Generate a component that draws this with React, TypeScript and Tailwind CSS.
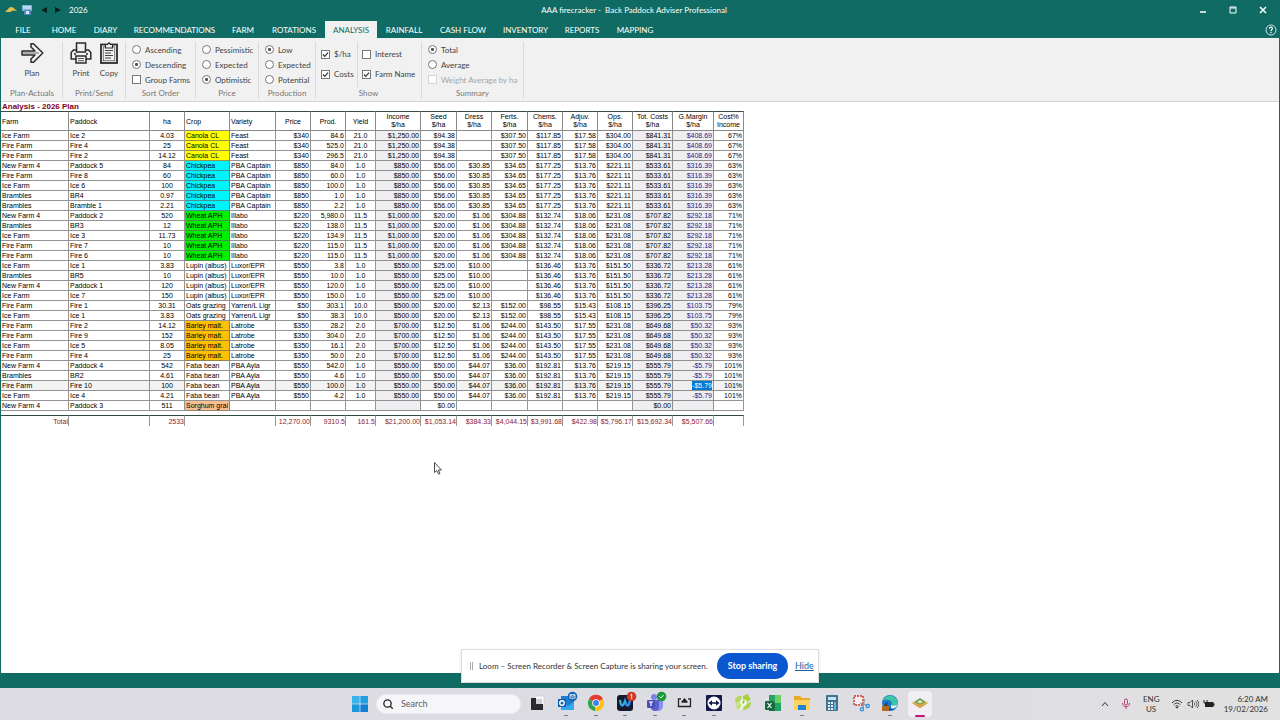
import { useState } from 'react'
import type { ReactNode } from 'react'
import clsx from 'clsx'

const tabs = [
  { label: 'FILE', width: 'w-[40px]' },
  { label: 'HOME', width: 'w-[42px]' },
  { label: 'DIARY', width: 'w-[41px]' },
  { label: 'RECOMMENDATIONS', width: 'w-[97px]' },
  { label: 'FARM', width: 'w-[40px]' },
  { label: 'ROTATIONS', width: 'w-[62px]' },
  { label: 'ANALYSIS', width: 'w-[52px]' },
  { label: 'RAINFALL', width: 'w-[54px]' },
  { label: 'CASH FLOW', width: 'w-[64px]' },
  { label: 'INVENTORY', width: 'w-[61px]' },
  { label: 'REPORTS', width: 'w-[52px]' },
  { label: 'MAPPING', width: 'w-[54px]' },
]

const columns = [
  { title: 'Farm', width: 'w-[68px]', align: 'text-left' },
  { title: 'Paddock', width: 'w-[81px]', align: 'text-left' },
  { title: 'ha', width: 'w-[35px]', align: 'text-center' },
  { title: 'Crop', width: 'w-[45px]', align: 'text-left' },
  { title: 'Variety', width: 'w-[46px]', align: 'text-left' },
  { title: 'Price', width: 'w-[35px]', align: 'text-right' },
  { title: 'Prod.', width: 'w-[35px]', align: 'text-right' },
  { title: 'Yield', width: 'w-[30px]', align: 'text-center' },
  { title: 'Income', unit: '$/ha', width: 'w-[45px]', align: 'text-right' },
  { title: 'Seed', unit: '$/ha', width: 'w-[36px]', align: 'text-right' },
  { title: 'Dress', unit: '$/ha', width: 'w-[35px]', align: 'text-right' },
  { title: 'Ferts.', unit: '$/ha', width: 'w-[36px]', align: 'text-right' },
  { title: 'Chems.', unit: '$/ha', width: 'w-[35px]', align: 'text-right' },
  { title: 'Adjuv.', unit: '$/ha', width: 'w-[35px]', align: 'text-right' },
  { title: 'Ops.', unit: '$/ha', width: 'w-[35px]', align: 'text-right' },
  { title: 'Tot. Costs', unit: '$/ha', width: 'w-[40px]', align: 'text-right' },
  { title: 'G.Margin', unit: '$/ha', width: 'w-[41px]', align: 'text-right' },
  { title: 'Cost%', unit: 'Income', width: 'w-[30px]', align: 'text-right' },
]

const CROP = 3
const MARGIN = 16
const shaded = [8, 15, 16]

const cropColors: Record<string, string> = {
  'Canola CL': 'bg-[#ffff00]',
  Chickpea: 'bg-[#00f4fc]',
  'Wheat APH': 'bg-[#00f000]',
  'Barley malt.': 'bg-[#ffc000]',
  'Sorghum grai': 'bg-[#fabf8f]',
}

// the costs are the same for every paddock with the same crop
const crops: Record<string, { variety: string; price: string; yld: string; costs: string[] }> = {
  'Canola CL': { variety: 'Feast', price: '$340', yld: '21.0', costs: ['$1,250.00', '$94.38', '', '$307.50', '$117.85', '$17.58', '$304.00', '$841.31', '$408.69', '67%'] },
  Chickpea: { variety: 'PBA Captain', price: '$850', yld: '1.0', costs: ['$850.00', '$56.00', '$30.85', '$34.65', '$177.25', '$13.76', '$221.11', '$533.61', '$316.39', '63%'] },
  'Wheat APH': { variety: 'Illabo', price: '$220', yld: '11.5', costs: ['$1,000.00', '$20.00', '$1.06', '$304.88', '$132.74', '$18.06', '$231.08', '$707.82', '$292.18', '71%'] },
  'Lupin (albus)': { variety: 'Luxor/EPR', price: '$550', yld: '1.0', costs: ['$550.00', '$25.00', '$10.00', '', '$136.46', '$13.76', '$151.50', '$336.72', '$213.28', '61%'] },
  'Oats grazing': { variety: 'Yarren/L Ligr', price: '$50', yld: '10.0', costs: ['$500.00', '$20.00', '$2.13', '$152.00', '$98.55', '$15.43', '$108.15', '$396.25', '$103.75', '79%'] },
  'Barley malt.': { variety: 'Latrobe', price: '$350', yld: '2.0', costs: ['$700.00', '$12.50', '$1.06', '$244.00', '$143.50', '$17.55', '$231.08', '$649.68', '$50.32', '93%'] },
  'Faba bean': { variety: 'PBA Ayla', price: '$550', yld: '1.0', costs: ['$550.00', '$50.00', '$44.07', '$36.00', '$192.81', '$13.76', '$219.15', '$555.79', '-$5.79', '101%'] },
  'Sorghum grai': { variety: '', price: '', yld: '', costs: ['', '$0.00', '', '', '', '', '', '$0.00', '', ''] },
}

const paddocks = [
  ['Ice Farm', 'Ice 2', '4.03', 'Canola CL', '84.6'],
  ['Fire Farm', 'Fire 4', '25', 'Canola CL', '525.0'],
  ['Fire Farm', 'Fire 2', '14.12', 'Canola CL', '296.5'],
  ['New Farm 4', 'Paddock 5', '84', 'Chickpea', '84.0'],
  ['Fire Farm', 'Fire 8', '60', 'Chickpea', '60.0'],
  ['Ice Farm', 'Ice 6', '100', 'Chickpea', '100.0'],
  ['Brambles', 'BR4', '0.97', 'Chickpea', '1.0'],
  ['Brambles', 'Bramble 1', '2.21', 'Chickpea', '2.2'],
  ['New Farm 4', 'Paddock 2', '520', 'Wheat APH', '5,980.0'],
  ['Brambles', 'BR3', '12', 'Wheat APH', '138.0'],
  ['Ice Farm', 'Ice 3', '11.73', 'Wheat APH', '134.9'],
  ['Fire Farm', 'Fire 7', '10', 'Wheat APH', '115.0'],
  ['Fire Farm', 'Fire 6', '10', 'Wheat APH', '115.0'],
  ['Ice Farm', 'Ice 1', '3.83', 'Lupin (albus)', '3.8'],
  ['Brambles', 'BR5', '10', 'Lupin (albus)', '10.0'],
  ['New Farm 4', 'Paddock 1', '120', 'Lupin (albus)', '120.0'],
  ['Ice Farm', 'Ice 7', '150', 'Lupin (albus)', '150.0'],
  ['Fire Farm', 'Fire 1', '30.31', 'Oats grazing', '303.1'],
  ['Ice Farm', 'Ice 1', '3.83', 'Oats grazing', '38.3'],
  ['Fire Farm', 'Fire 2', '14.12', 'Barley malt.', '28.2'],
  ['Fire Farm', 'Fire 9', '152', 'Barley malt.', '304.0'],
  ['Ice Farm', 'Ice 5', '8.05', 'Barley malt.', '16.1'],
  ['Fire Farm', 'Fire 4', '25', 'Barley malt.', '50.0'],
  ['New Farm 4', 'Paddock 4', '542', 'Faba bean', '542.0'],
  ['Brambles', 'BR2', '4.61', 'Faba bean', '4.6'],
  ['Fire Farm', 'Fire 10', '100', 'Faba bean', '100.0'],
  ['Ice Farm', 'Ice 4', '4.21', 'Faba bean', '4.2'],
  ['New Farm 4', 'Paddock 3', '511', 'Sorghum grai', ''],
]

const totals = ['Total', '', '2533', '', '', '12,270.00', '9310.5', '161.5', '$21,200.00', '$1,053.14', '$384.33', '$4,044.15', '$3,991.68', '$422.98', '$5,796.17', '$15,692.34', '$5,507.66', '']

function Radio({ name, label, checked }: { name: string; label: string; checked?: boolean }) {
  return (
    <label className="flex h-[15px] items-center gap-1">
      <input
        type="radio"
        name={name}
        defaultChecked={checked}
        className="size-[9px] shrink-0 appearance-none rounded-full border border-[#777] bg-white checked:bg-[radial-gradient(circle,#555_25%,#fff_40%)]"
      />
      {label}
    </label>
  )
}

function Checkbox({ label, checked, disabled, height = 'h-[15px]' }: { label: string; checked?: boolean; disabled?: boolean; height?: string }) {
  return (
    <label className={clsx('flex items-center gap-1', height, disabled && 'text-[#a6a6a6]')}>
      <span className="grid shrink-0">
        <input
          type="checkbox"
          defaultChecked={checked}
          disabled={disabled}
          className="peer col-start-1 row-start-1 size-[9px] appearance-none border border-[#777] bg-white disabled:border-[#d4d4d4]"
        />
        <svg viewBox="0 0 9 9" className="pointer-events-none invisible col-start-1 row-start-1 size-[9px] peer-checked:visible">
          <path d="M2 4.5 3.8 6.4 7 2.6" fill="none" stroke="#333" strokeWidth="1.2" />
        </svg>
      </span>
      {label}
    </label>
  )
}

function Group({ title, width, children }: { title: string; width: string; children: ReactNode }) {
  return (
    <fieldset className={clsx('flex shrink-0 flex-col border-r border-[#dadada]', width)}>
      <div className="flex h-[45px]">{children}</div>
      <div className="h-3 text-center leading-3 text-[#777]">{title}</div>
    </fieldset>
  )
}

function ArrowIcon() {
  return (
    <svg viewBox="0 0 24 22" className="h-[22px] w-6" fill="none" stroke="#2b2b2b" strokeWidth="1.5" strokeLinejoin="round">
      <path d="M2 9h13l-4-4V1.800h2.500L22.800 11l-9.300 9.200H11V17l4-4H2z" />
      <path d="M3 11h16" strokeWidth=".7" />
    </svg>
  )
}

function PrintIcon() {
  return (
    <svg viewBox="0 0 22 22" className="size-[22px]" fill="none" stroke="#2b2b2b" strokeWidth="1.5">
      <path d="M6.500 8V1h9v7" />
      <path d="M6 17H1.200v-6.500L3.500 8h3v2h9V8h3l2.300 2.500V17H16" />
      <path d="M6 14h10v7H6zM4 12h2M16 12h2" />
      <path d="M8 16.500h6M8 18.700h6" strokeWidth=".8" />
    </svg>
  )
}

function CopyIcon() {
  return (
    <svg viewBox="0 0 20 22" className="h-[22px] w-5" fill="none" stroke="#2b2b2b">
      <rect x="2" y="2.5" width="16" height="18.5" strokeWidth="1.8" />
      <rect x="4.2" y="4.8" width="11.6" height="14" strokeWidth=".6" />
      <path d="M6.500 2.500h2L10 .8l1.500 1.700h2V6h-7z" fill="#f1f1f1" strokeWidth="1.2" />
      <path d="M6 8.500h8M6 11h6M6 13.500h8M6 16h6" strokeWidth=".9" />
    </svg>
  )
}

function Ribbon() {
  return (
    <section className="flex h-16 overflow-hidden border-b border-[#d2d4d8] bg-[#f1f1f1] pt-1 pb-[2px] pl-px text-[8px] text-[#444]">
      <Group title="Plan-Actuals" width="w-[61px]">
        <button type="button" className="flex flex-1 flex-col items-center">
          <ArrowIcon />
          <span className="mt-[3px] leading-3">Plan</span>
        </button>
      </Group>
      <Group title="Print/Send" width="w-[63px]">
        <button type="button" className="flex w-9 flex-col items-center">
          <PrintIcon />
          <span className="mt-[3px] leading-3">Print</span>
        </button>
        <button type="button" className="flex w-5 flex-col items-center">
          <CopyIcon />
          <span className="mt-[3px] leading-3">Copy</span>
        </button>
      </Group>
      <Group title="Sort Order" width="w-[70px]">
        <div className="pl-[6px]">
          <Radio name="sort" label="Ascending" />
          <Radio name="sort" label="Descending" checked />
          <Checkbox label="Group Farms" />
        </div>
      </Group>
      <Group title="Price" width="w-[63px]">
        <div className="pl-[6px]">
          <Radio name="price" label="Pessimistic" />
          <Radio name="price" label="Expected" />
          <Radio name="price" label="Optimistic" checked />
        </div>
      </Group>
      <Group title="Production" width="w-[57px]">
        <div className="pl-[6px]">
          <Radio name="production" label="Low" checked />
          <Radio name="production" label="Expected" />
          <Radio name="production" label="Potential" />
        </div>
      </Group>
      <Group title="Show" width="w-[106px]">
        <div className="w-[42px] border-r border-[#dadada] pt-[2px] pl-[5px]">
          <Checkbox label="$/ha" height="h-5" checked />
          <Checkbox label="Costs" height="h-5" checked />
        </div>
        <div className="pt-[2px] pl-1">
          <Checkbox label="Interest" height="h-5" />
          <Checkbox label="Farm Name" height="h-5" checked />
        </div>
      </Group>
      <Group title="Summary" width="w-[102px]">
        <div className="pl-[6px]">
          <Radio name="summary" label="Total" checked />
          <Radio name="summary" label="Average" />
          <Checkbox label="Weight Average by ha" disabled />
        </div>
      </Group>
    </section>
  )
}

function AnalysisTable() {
  return (
    <table className="w-[743px] table-fixed border-separate border-spacing-0 font-['Liberation_Sans',sans-serif] text-[7px] leading-[9px] whitespace-nowrap text-black">
      <caption className="h-[9px] pl-px text-left text-[8px] leading-[9px] font-bold text-[#800020]">
        Analysis - 2026 Plan
      </caption>
      <colgroup>
        {columns.map((c) => (
          <col key={c.title} className={c.width} />
        ))}
      </colgroup>
      <thead>
        <tr className="h-5">
          {columns.map((c, i) => (
            <th
              key={c.title}
              scope="col"
              className={clsx(
                'border-t border-r border-b border-t-[#3c4a46] border-r-[#8a8a8a] border-b-[#8a8a8a] p-0 align-middle font-normal',
                i < 2 || i === 3 || i === 4 ? 'pl-px text-left' : 'text-center',
              )}
            >
              <div className={c.unit && 'leading-[8px]'}>
                {c.title}
                {c.unit && (
                  <>
                    <br />
                    {c.unit}
                  </>
                )}
              </div>
            </th>
          ))}
        </tr>
      </thead>
      <tbody>
        {paddocks.map(([farm, paddock, ha, crop, prod]) => {
          const { variety, price, yld, costs } = crops[crop]
          const selected = paddock === 'Fire 10'
          const cells = [farm, paddock, ha, crop, variety, price, prod, yld, ...costs]
          return (
            <tr key={paddock + crop} className={selected ? 'bg-[#f3f3f3]' : 'bg-white'}>
              {cells.map((text, i) => (
                <td
                  key={i}
                  className={clsx(
                    'h-[10px] border-r border-b border-[#666]/70 p-0 px-px',
                    columns[i].align,
                    shaded.includes(i) && 'bg-[#efeff1]',
                    i === MARGIN && 'text-[#1c1c8c]',
                    i === CROP && (cropColors[crop] ?? 'bg-white'),
                  )}
                >
                  {selected && i === MARGIN ? <span className="inline-block bg-[#0078d7] text-white">{text}</span> : text}
                </td>
              ))}
            </tr>
          )
        })}
      </tbody>
      <tfoot className="text-[#8c1c30]">
        <tr>
          <td colSpan={18} className="h-1 p-0" />
        </tr>
        <tr>
          {totals.map((text, i) => (
            <td
              key={i}
              className={clsx(
                'h-[11px] border-t border-t-[#2f4a40] border-r-[#999] p-0 text-right',
                i !== 3 && 'border-r',
              )}
            >
              {text}
            </td>
          ))}
        </tr>
      </tfoot>
    </table>
  )
}

function TitleBar() {
  return (
    <header className="grid h-[21px] grid-cols-[1fr_auto_1fr] items-center pb-px text-[8px] text-white">
      <div className="flex items-center pl-[5px]">
        <svg viewBox="0 0 12 8" className="h-2 w-3">
          <path d="M0 6 5 1l3 .5L12 5 8 4.500 5 6z" fill="#f3bb45" />
          <path d="m1 5.500 4-3L8 4 5 5.500z" fill="#c9c75a" />
        </svg>
        <svg viewBox="0 0 12 12" className="ml-1 size-3">
          <path d="M1 1h10v6H1z" fill="#7fb2d8" />
          <path d="M2 2h8v3H2z" fill="#b9d8ee" />
          <path d="M3 6h7v5H3z" fill="#4c8ec4" />
          <path d="M5 7h3v3H5z" fill="#dbe8f2" />
        </svg>
        <svg viewBox="0 0 6 6" className="ml-2 size-[6px]">
          <path d="M6 0v6L0 3z" fill="#0a1f1d" />
        </svg>
        <svg viewBox="0 0 6 6" className="ml-2 size-[6px]">
          <path d="M0 0v6l6-3z" fill="#0a1f1d" />
        </svg>
        <span className="ml-2">2026</span>
      </div>
      <h1 className="mr-3 whitespace-pre">AAA firecracker -  Back Paddock Adviser Professional</h1>
      <div className="flex justify-end gap-5 pr-3">
        <button type="button" aria-label="Minimise" className="p-px">
          <svg viewBox="0 0 8 8" className="size-2">
            <path d="M1 6h6" stroke="#fff" strokeWidth="1.5" />
          </svg>
        </button>
        <button type="button" aria-label="Restore" className="p-px">
          <svg viewBox="0 0 8 8" className="size-2">
            <path d="M1 1h6v6H1zM1 2h6" stroke="#fff" fill="none" />
          </svg>
        </button>
        <button type="button" aria-label="Close" className="p-px">
          <svg viewBox="0 0 8 8" className="size-2">
            <path d="m1 1 6 6M7 1 1 7" stroke="#fff" strokeWidth="1.5" />
          </svg>
        </button>
      </div>
    </header>
  )
}

function Badge({ color, children }: { color: string; children: ReactNode }) {
  return (
    <>
      <circle cx="18.5" cy="5.5" r="4.8" fill={color} />
      {children}
    </>
  )
}

const apps: { name: string; open?: boolean; active?: boolean; icon: ReactNode }[] = [
  {
    name: 'Task view',
    icon: (
      <>
        <path d="M10 5h9v10h-9z" fill="#f7f7f7" stroke="#c4c4c4" strokeWidth=".5" />
        <path d="M6 7h5v6h7v6H6z" fill="#2a2a2a" />
        <path d="M11 8h6v5h-6z" fill="#cfcfd2" />
      </>
    ),
  },
  {
    name: 'Outlook',
    open: true,
    icon: (
      <>
        <path d="M7 5h13v14H7z" fill="#1e7fd0" />
        <path d="m7 12 7 3 6-4v8H7z" fill="#35a9ec" />
        <path d="M4 8h8v8H4z" fill="#0f5fae" />
        <circle cx="8" cy="12" r="2.2" fill="none" stroke="#fff" strokeWidth="1.4" />
        <Badge color="#1565b8">
          <path d="M16 3.700h5v3.500h-5zM16 3.700l2.500 2 2.500-2" fill="none" stroke="#fff" strokeWidth=".8" />
        </Badge>
      </>
    ),
  },
  {
    name: 'Chrome',
    open: true,
    icon: (
      <>
        <path d="M12 12 5 8a8 8 0 0 1 14 0z" fill="#e33b2e" />
        <path d="M12 12 5 8a8 8 0 0 0 6 12z" fill="#33a352" />
        <path d="M12 12 19 8a8 8 0 0 1-8 12z" fill="#fbc116" />
        <circle cx="12" cy="12" r="3.8" fill="#fff" />
        <circle cx="12" cy="12" r="3" fill="#4183ee" />
      </>
    ),
  },
  {
    name: 'Webex',
    open: true,
    icon: (
      <>
        <rect x="4" y="4" width="16" height="16" rx="3" fill="#15172b" />
        <path d="M7 9c1 7 3 7 5 1 2 6 4 6 5-1" fill="none" stroke="#2d8ff0" strokeWidth="2.5" />
        <path d="M7 9c1 7 3 7 5 1" fill="none" stroke="#3ad0c0" />
        <Badge color="#d03a20">
          <path d="m17.500 4 1.200-1v5" fill="none" stroke="#fff" strokeWidth=".9" />
        </Badge>
      </>
    ),
  },
  {
    name: 'Teams',
    open: true,
    icon: (
      <>
        <circle cx="11" cy="6" r="3" fill="#7b83eb" />
        <path d="M7 9h13v6a5 5 0 0 1-9 3z" fill="#8a90f0" />
        <path d="M8 9h8v7a4 4 0 0 1-8 0z" fill="#5b60cf" />
        <rect x="4" y="9" width="8" height="8" rx="1" fill="#4a50b8" />
        <path d="M6 11h4M8 11v4" stroke="#fff" strokeWidth="1.2" />
        <Badge color="#1c9a3a">
          <path d="m16.500 5.500 1.500 1.500 2.500-3" fill="none" stroke="#fff" />
        </Badge>
      </>
    ),
  },
  {
    name: 'Send to device',
    open: true,
    icon: (
      <>
        <path d="M9 7.800H6.500v7.700h12V7.800H16" fill="none" stroke="#222" strokeWidth="1.3" />
        <path d="M9.500 10.500 12.500 7l3 3.500v1.300h-6z" fill="#222" />
      </>
    ),
  },
  {
    name: 'TeamViewer',
    open: true,
    icon: (
      <>
        <rect x="4" y="4" width="16" height="16" rx="1" fill="#13184a" />
        <circle cx="12" cy="12" r="6.5" fill="#fff" />
        <path d="M8 12h8" stroke="#13184a" strokeWidth="1.5" />
        <path d="m6.500 12 3.500-2.800v5.600zM17.500 12 14 9.200v5.600z" fill="#13184a" />
      </>
    ),
  },
  {
    name: 'Paddock maps',
    icon: (
      <>
        <path d="M4 9c1-3 4-5 7-4l-2 5-4 3z" fill="#b3d95a" />
        <path d="M5 14l4-3 2 4-3 4c-2-1-3-3-3-5z" fill="#c4e27c" />
        <path d="M12 5l5-2 1 3 2 2-4 3-4-2z" fill="#a4d038" />
        <path d="M20 11c0 5-4 8-8 8l1-3 4-4z" fill="#acd443" />
        <circle cx="12.5" cy="11.5" r="3" fill="#f4f9e6" />
        <path d="M9 19 15 9" stroke="#f4f9e6" strokeWidth="1.5" />
        <path d="M12 9.500h2l-1 3h-2z" fill="#98c72c" />
      </>
    ),
  },
  {
    name: 'Excel',
    icon: (
      <>
        <path d="M8 4h12v16H8z" fill="#23a366" />
        <path d="M14 4h6v8h-6z" fill="#6fd06a" />
        <path d="M8 12h6v8H8z" fill="#18703f" />
        <rect x="4" y="10" width="9" height="9" rx="1" fill="#136b3a" />
        <path d="m6.500 12 4 5M10.500 12l-4 5" stroke="#fff" strokeWidth="1.2" />
      </>
    ),
  },
  {
    name: 'File Explorer',
    open: true,
    icon: (
      <>
        <path d="M4 5h6l2 2h8v12H4z" fill="#eda927" />
        <path d="M4 9h16v10H4z" fill="#fcd461" />
        <path d="M8 14h8v5H8z" fill="#2284d0" />
      </>
    ),
  },
  {
    name: 'Calculator',
    icon: (
      <>
        <rect x="6" y="4" width="12" height="16" rx="1" fill="#46708c" />
        <path d="M8 6h8v3H8z" fill="#bde8f6" />
        <path d="M8 11h2v2H8zM11 11h2v2h-2zM8 14h2v2H8zM11 14h2v2h-2zM8 17h2v2H8zM11 17h2v2h-2z" fill="#e6f1f7" />
        <path d="M14 11h2v8h-2z" fill="#57b8ea" />
      </>
    ),
  },
  {
    name: 'Snipping Tool',
    icon: (
      <>
        <rect x="5" y="5" width="9" height="9" fill="#f4eeee" stroke="#c53a2c" strokeWidth="1.5" strokeDasharray="2 1" />
        <path d="m11 12 7 2.500M15.500 8l-1.500 9" stroke="#8e9aa6" strokeWidth="1.2" />
        <circle cx="13" cy="18.2" r="1.6" fill="none" stroke="#2a8ad6" strokeWidth="1.2" />
        <circle cx="18.7" cy="15" r="1.6" fill="none" stroke="#2a8ad6" strokeWidth="1.2" />
      </>
    ),
  },
  {
    name: 'Edge',
    open: true,
    icon: (
      <>
        <circle cx="12" cy="12" r="8" fill="#1c78c8" />
        <path d="M4.500 10a8 8 0 0 1 15.500 2c0 4-6 4-6 1 0-5-7-5-9.500-3z" fill="#3cc6a6" />
        <path d="M10 11c-2 4 2 8 7 7a8 8 0 0 1-10-1c-2-3 0-6 3-6z" fill="#0e4f9a" />
        <path d="M13 13.500c2 2 5 1 6.500 0-1 3-3.500 5-6.500 3.500z" fill="#dff1f4" />
        <path d="M4 15h7v5H4z" fill="#b06a22" />
        <path d="M6.500 15v-1.200h2V15" fill="none" stroke="#6b3f14" strokeWidth=".8" />
      </>
    ),
  },
  {
    name: 'Back Paddock Adviser',
    active: true,
    icon: (
      <>
        <path d="m12 10 8 2-8 5-8-5z" fill="#d9822c" />
        <path d="m12 8 8 4-8 3.500L4 12z" fill="#e8b24a" />
        <path d="m12 7 6 4-6 3-6-3z" fill="#6ba35c" />
        <path d="m12 9 3 2-3 1.500L9 11z" fill="#f0dfa0" />
      </>
    ),
  },
]

function Taskbar() {
  return (
    <footer className="grid h-8 grid-cols-[1fr_auto_1fr] items-center bg-linear-to-r from-[#dcdbe1] via-[#dcdce3] to-[#e1e1e1] pl-1 text-[#333]">
      <div />
      <div className="flex items-center">
        <button type="button" aria-label="Start">
          <svg viewBox="0 0 16 16" className="size-4">
            <path d="M0 0h7.600v7.600H0z" fill="#35b3ea" />
            <path d="M8.400 0H16v7.600H8.400z" fill="#1f9fe2" />
            <path d="M0 8.400h7.600V16H0z" fill="#1b97de" />
            <path d="M8.400 8.400H16V16H8.400z" fill="#0f7fd2" />
          </svg>
        </button>
        <label className="ml-2 flex h-5 w-[145px] items-center gap-2 rounded-full border border-[#ececf1] bg-[#f6f6f9] px-[6px]">
          <svg viewBox="0 0 10 10" className="size-[10px] shrink-0" fill="none" stroke="#222" strokeWidth="1.3">
            <circle cx="4.5" cy="4.5" r="3.7" />
            <path d="m7.200 7.200 2.500 2.500" />
          </svg>
          <input type="search" aria-label="Search" placeholder="Search" className="w-full bg-transparent text-[9px] outline-none placeholder:text-[#5c5c5c]" />
        </label>
        <div className="ml-1 flex w-[407px] justify-between">
          {apps.map((app) => (
            <button
              key={app.name}
              type="button"
              aria-label={app.name}
              className={clsx('flex h-[26px] w-6 flex-col items-center rounded-sm', app.active && 'bg-[#f1eff4]')}
            >
              <svg viewBox="0 0 24 24" className="size-6">
                {app.icon}
              </svg>
              {app.open && <span className="h-px w-1 rounded-full bg-[#777]" />}
              {app.active && <span className="h-[2px] w-[10px] shrink-0 rounded-full bg-[#c2187a]" />}
            </button>
          ))}
        </div>
      </div>
      <div className="flex items-center justify-end pr-3 text-[8px] leading-[10px]">
        <svg viewBox="0 0 8 8" className="size-2" fill="none" stroke="#333">
          <path d="m1 6 3-3.500L7 6" />
        </svg>
        <svg viewBox="0 0 10 12" className="ml-3 h-3 w-[10px]" fill="none" stroke="#c23468">
          <rect x="3.5" y="1" width="3" height="6" rx="1.5" />
          <path d="M1.500 5c0 5 7 5 7 0M5 9v2" />
        </svg>
        <div className="ml-3 w-4 text-center">
          ENG
          <br />
          US
        </div>
        <svg viewBox="0 0 12 10" className="ml-3 h-[10px] w-3" fill="none" stroke="#333">
          <path d="M1 4c3-3.500 7-3.500 10 0M2.700 5.800c2-2.300 4.600-2.300 6.600 0M4.400 7.500c1-1 2.200-1 3.200 0" />
          <circle cx="6" cy="8.5" r=".6" fill="#333" />
        </svg>
        <svg viewBox="0 0 12 10" className="ml-1 h-[10px] w-3" fill="none" stroke="#333">
          <path d="M1 3.500h2L5.500 1v8L3 6.500H1zM7 3.500c1 1 1 2 0 3M8.500 2.200c2 1.800 2 3.800 0 5.600M10 1c2.500 2.500 2.500 5.500 0 8" strokeWidth=".8" />
        </svg>
        <svg viewBox="0 0 12 10" className="ml-1 h-[10px] w-3">
          <path d="M2 3h8.500v5H2zM10.500 4.500h1v2h-1z" fill="#222" />
          <path d="M1 1v3h3V1M2.500 4v3" stroke="#222" fill="none" />
        </svg>
        <div className="ml-2 w-[45px] text-right whitespace-nowrap">
          <time>
            6:20 AM
            <br />
            19/02/2026
          </time>
        </div>
      </div>
    </footer>
  )
}

export default function App() {
  const [activeTab, setActiveTab] = useState('ANALYSIS')

  return (
    <div className="relative flex min-h-screen flex-col bg-[#0f6b63] font-['Lato','Open_Sans',sans-serif]">
      <TitleBar />
      <nav className="flex h-[17px] items-stretch pl-[3px] text-[8px] text-white">
        {tabs.map((tab) => (
          <button
            key={tab.label}
            type="button"
            onClick={() => setActiveTab(tab.label)}
            className={clsx('shrink-0 whitespace-nowrap', tab.width, activeTab === tab.label && 'bg-[#f1f1f1] text-[#0f6b63]')}
          >
            {tab.label}
          </button>
        ))}
        <button type="button" aria-label="Help" className="mr-[3px] ml-auto">
          <svg viewBox="0 0 12 12" className="size-3" fill="none" stroke="#fff">
            <circle cx="6" cy="6" r="5" strokeWidth=".8" />
            <path d="M4.500 4.800c0-2.200 3-2 3-.2C7.500 5.800 6 5.800 6 7.200M6 8v1.200" strokeWidth="1.2" />
          </svg>
        </button>
      </nav>
      <div className="mx-px flex flex-1 flex-col bg-white">
        <Ribbon />
        <main className="flex-1 overflow-x-auto">
          <AnalysisTable />
        </main>
      </div>
      <div className="h-[15px]" />
      <Taskbar />

      <svg viewBox="0 0 8 13" className="pointer-events-none absolute top-[462px] left-[434px] h-[13px] w-2">
        <path d="M.5.5v10l2.300-2 1.700 3.700 1.500-.7-1.600-3.500h3z" fill="#fff" stroke="#222" strokeWidth=".8" />
      </svg>

      <div className="absolute bottom-[37px] left-1/2 flex h-[34px] w-[358px] -translate-x-1/2 items-center border border-[#dedede] bg-white pl-2 text-[9px] text-[#333] shadow-sm">
        <span className="h-2 w-[3px] shrink-0 border-x border-[#aaa]" />
        <span className="ml-[6px] w-[232px] text-[8px] whitespace-nowrap">Loom – Screen Recorder &amp; Screen Capture is sharing your screen.</span>
        <button type="button" className="ml-[6px] h-[26px] w-[71px] rounded-full bg-[#0b57d0] font-bold whitespace-nowrap text-white">
          Stop sharing
        </button>
        <a href="#hide" className="ml-[7px] text-[#1a5fa8] underline">
          Hide
        </a>
      </div>
    </div>
  )
}
